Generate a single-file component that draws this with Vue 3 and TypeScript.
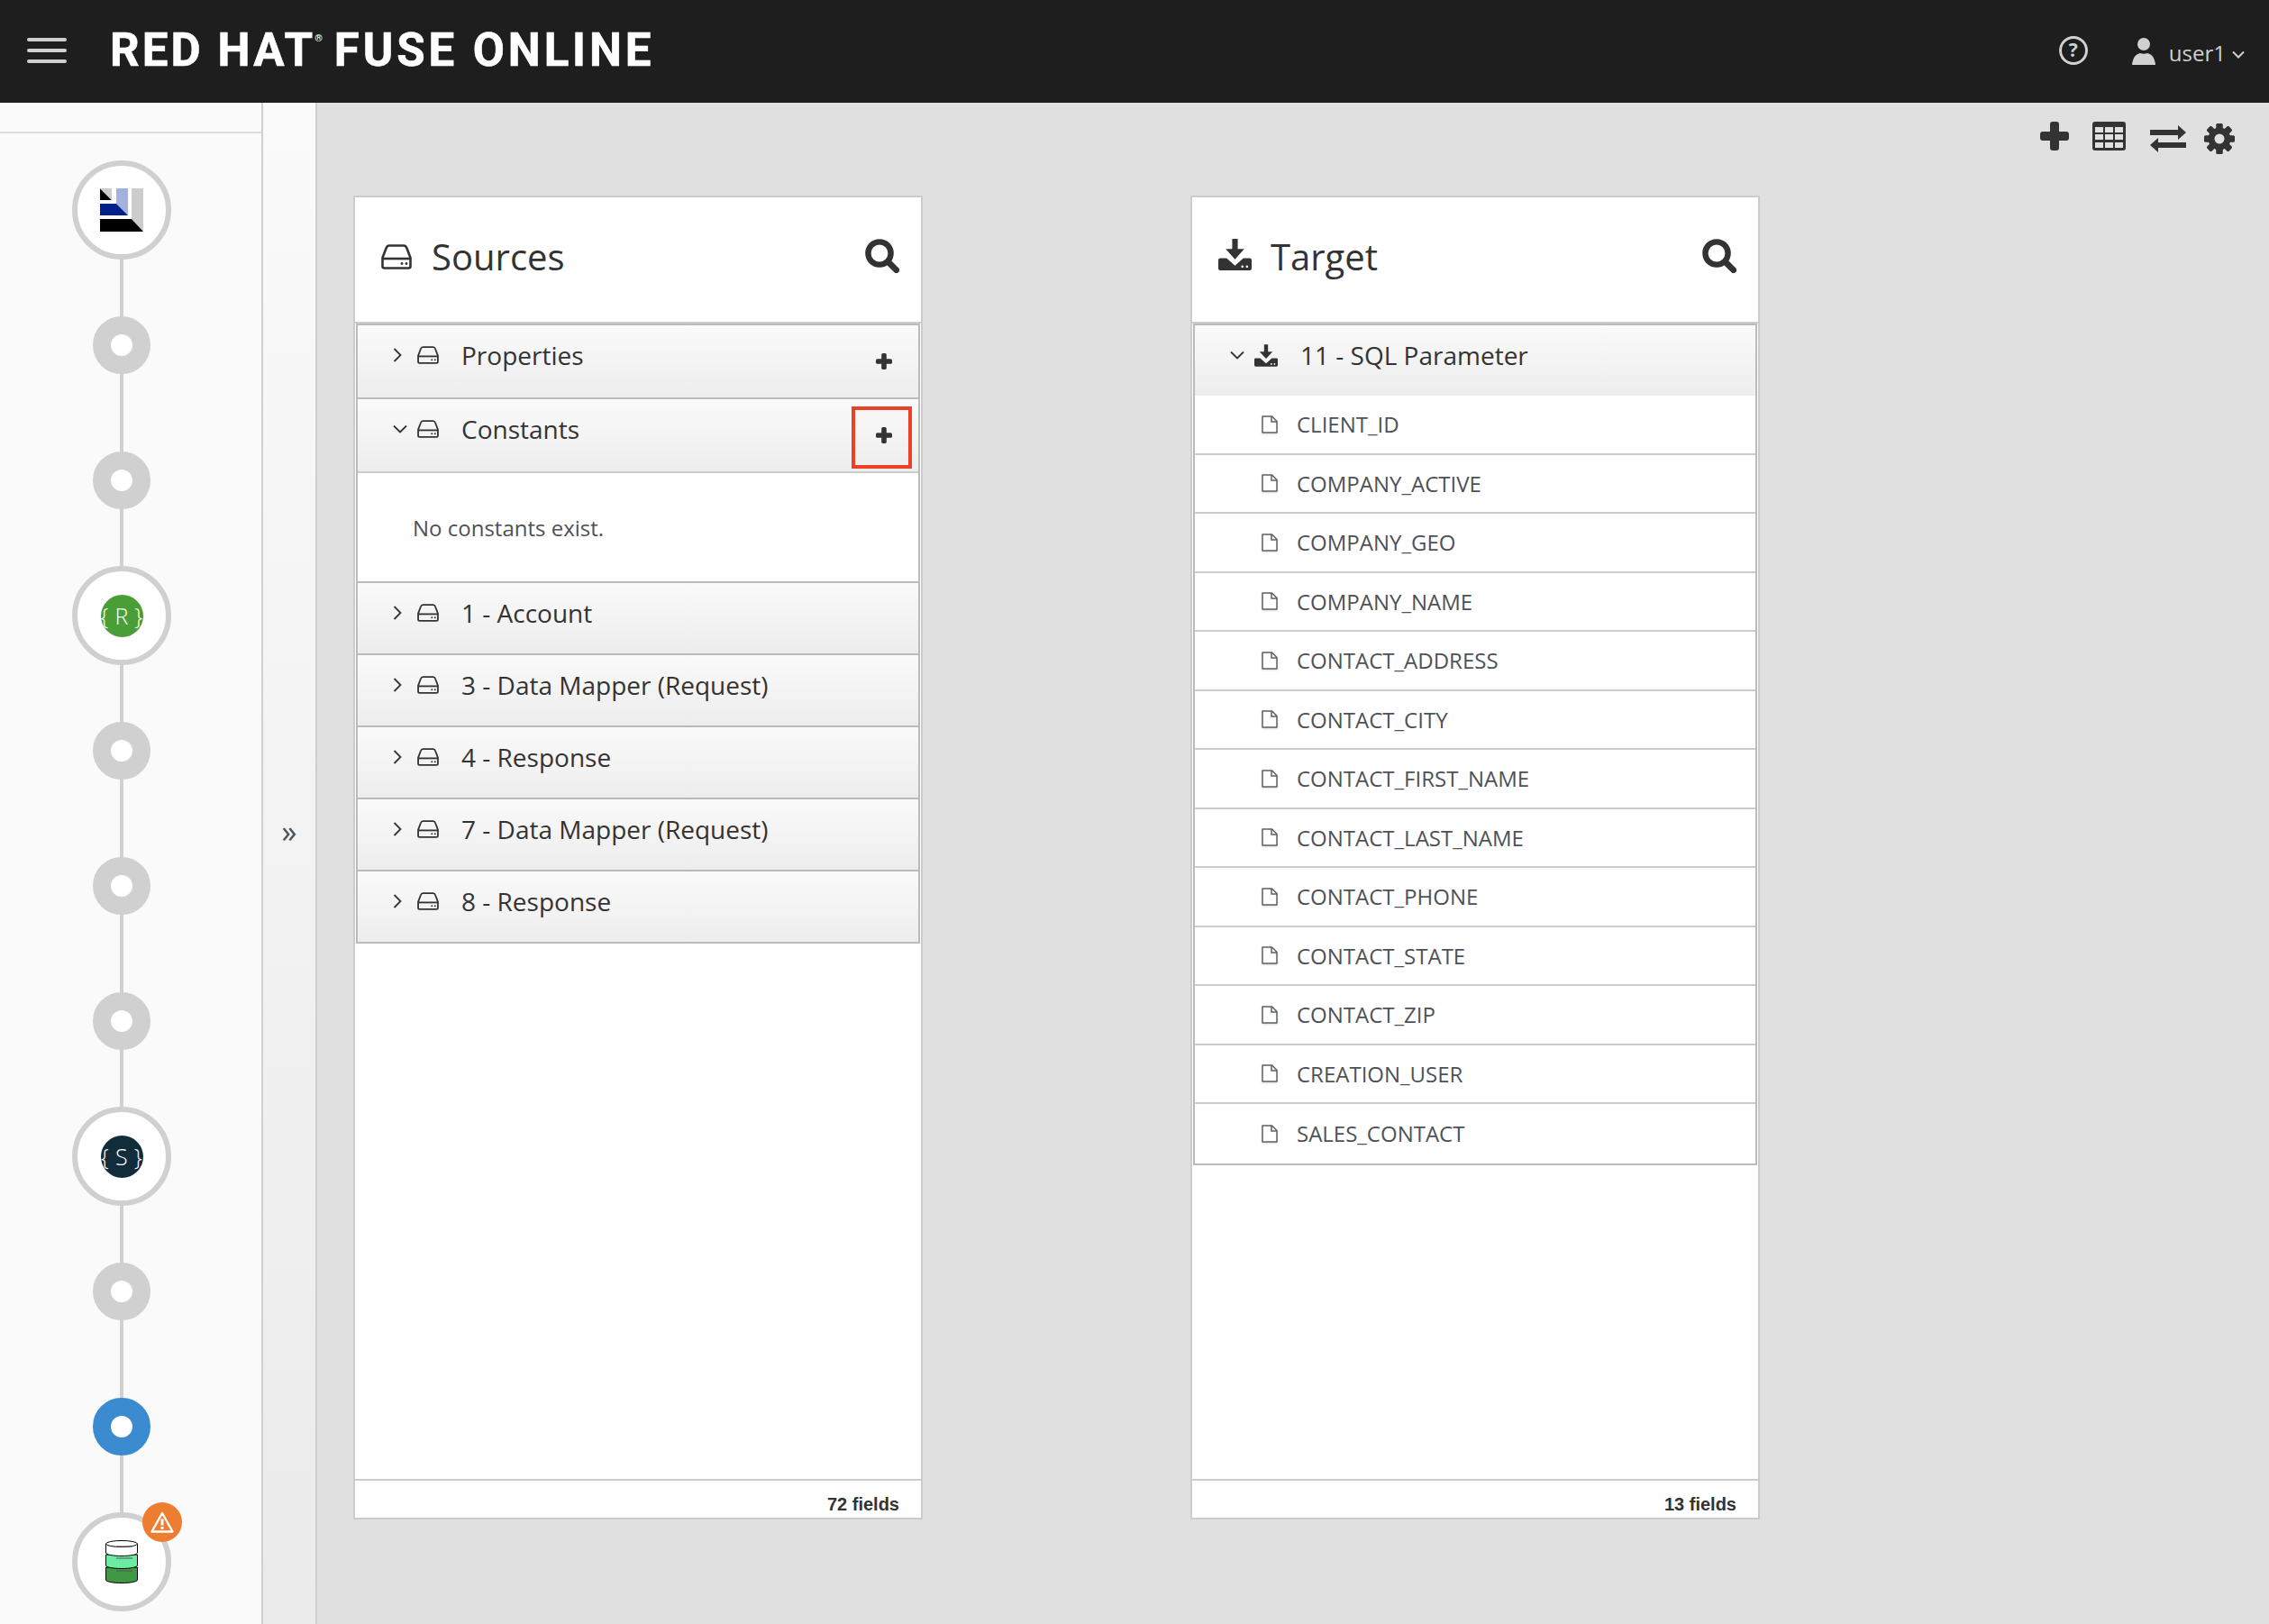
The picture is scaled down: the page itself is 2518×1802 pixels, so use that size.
<script setup lang="ts">
type Step = { kind: "logo" | "node" | "active" | "rest" | "soap" | "db" };

const steps: Step[] = [
  { kind: "logo" },
  { kind: "node" },
  { kind: "node" },
  { kind: "rest" },
  { kind: "node" },
  { kind: "node" },
  { kind: "node" },
  { kind: "soap" },
  { kind: "node" },
  { kind: "active" },
  { kind: "db" },
];

const sources = [
  { label: "Properties", open: false, add: true },
  { label: "Constants", open: true, add: true, marked: true },
  { label: "1 - Account", open: false, add: false },
  { label: "3 - Data Mapper (Request)", open: false, add: false },
  { label: "4 - Response", open: false, add: false },
  { label: "7 - Data Mapper (Request)", open: false, add: false },
  { label: "8 - Response", open: false, add: false },
];

const fields = [
  "CLIENT_ID",
  "COMPANY_ACTIVE",
  "COMPANY_GEO",
  "COMPANY_NAME",
  "CONTACT_ADDRESS",
  "CONTACT_CITY",
  "CONTACT_FIRST_NAME",
  "CONTACT_LAST_NAME",
  "CONTACT_PHONE",
  "CONTACT_STATE",
  "CONTACT_ZIP",
  "CREATION_USER",
  "SALES_CONTACT",
];

const gearTeeth = [0, 45, 90, 135, 180, 225, 270, 315];
</script>

<template>
  <div class="page">
    <svg class="defs" aria-hidden="true">
      <symbol id="hdd" viewBox="0 0 34 28">
        <path d="M9 1.500h16q2.500 0 3.500 3l4 10.500v9.500q0 2-2 2H3.500q-2 0-2-2V15l4-10.500q1-3 3.500-3z" fill="none" stroke="currentColor" stroke-width="2.600" />
        <path d="M2 16h30" stroke="currentColor" stroke-width="2.600" />
        <circle cx="23" cy="21.500" r="1.400" fill="currentColor" />
        <circle cx="28" cy="21.500" r="1.400" fill="currentColor" />
      </symbol>
      <symbol id="hdd-in" viewBox="0 0 36 34">
        <path d="M15 0h6v11h7L18 22 8 11h7z" fill="currentColor" />
        <path d="M0 23q0-2 2-2h7l9 8 9-8h7q2 0 2 2v9q0 2-2 2H2q-2 0-2-2z" fill="currentColor" />
        <circle cx="26" cy="30" r="1.300" fill="#fff" />
        <circle cx="31" cy="30" r="1.300" fill="#fff" />
      </symbol>
      <symbol id="search" viewBox="0 0 38 38">
        <circle cx="16" cy="16" r="12.600" fill="none" stroke="currentColor" stroke-width="6.400" />
        <path d="M25.500 25.500l9.200 9.200" stroke="currentColor" stroke-width="6.800" stroke-linecap="round" />
      </symbol>
      <symbol id="plus" viewBox="0 0 32 32">
        <rect x="11" y="0" width="10" height="32" rx="3" fill="currentColor" />
        <rect x="0" y="11" width="32" height="10" rx="3" fill="currentColor" />
      </symbol>
      <symbol id="file" viewBox="0 0 18 20">
        <path d="M1 1h10.500L17 6.500V19H1z" fill="#fff" stroke="#5c6066" stroke-width="1.500" stroke-linejoin="round" />
        <path d="M11 1v6h6" fill="none" stroke="#5c6066" stroke-width="1.500" />
      </symbol>
    </svg>

    <header class="topbar">
      <div class="burger"><i></i><i></i><i></i></div>
      <div class="brand">RED HAT<span class="reg">®</span><span class="product">FUSE ONLINE</span></div>
      <div class="help">?</div>
      <svg class="user" viewBox="0 0 26 30">
        <circle cx="13" cy="7" r="7" fill="currentColor" />
        <path d="M0 30q0-2 1-5 2-7 8-8 4 1.500 8 0 6 1 8 8 1 3 1 5z" fill="currentColor" />
      </svg>
      <span class="username">user1</span>
      <svg class="caret" viewBox="0 0 14 9"><path d="M1 1.500l6 6 6-6" fill="none" stroke="currentColor" stroke-width="2" /></svg>
    </header>

    <div class="body">
      <aside class="flow">
        <div class="flow-top"></div>
        <div class="steps">
          <div v-for="(step, i) in steps" :key="i" class="step">
            <div v-if="step.kind === 'node' || step.kind === 'active'" class="dot" :class="{ current: step.kind === 'active' }"></div>
            <div v-else class="ring">
              <svg v-if="step.kind === 'logo'" class="brandmark" viewBox="0 0 48 48">
                <path d="M0 0L13 13H0z" fill="#000" />
                <path d="M0 0H13V13z" fill="#ccc" />
                <path d="M18 0H31V30L18 17z" fill="#a3b1dc" />
                <path d="M0 17H18L31 30H0z" fill="#00218c" />
                <path d="M35 0H48V48L35 34z" fill="#ccc" />
                <path d="M0 34H35L48 48H0z" fill="#000" />
              </svg>
              <div v-else-if="step.kind === 'rest'" class="badge rest">{ R }</div>
              <div v-else-if="step.kind === 'soap'" class="badge soap">{ S }</div>
              <template v-else>
                <svg class="database" viewBox="0 0 36 48">
                  <path d="M.500 30v14c0 2 8 3.500 17.500 3.500s17.500-1.500 17.500-3.500V30z" fill="#409845" stroke="#000" />
                  <path d="M.500 16v12c0 2 8 3.500 17.500 3.500s17.500-1.500 17.500-3.500V16z" fill="#6aeca2" stroke="#000" />
                  <path d="M.500 4v10c0 2 8 3.500 17.500 3.500s17.500-1.500 17.500-3.500V4z" fill="#fff" stroke="#000" />
                  <ellipse cx="18" cy="4" rx="17.500" ry="3.500" fill="#fff" stroke="#000" />
                  <path d="M12 7h18M12 20h18M12 34h18" stroke="#555" stroke-width="1" />
                </svg>
                <div class="warn">
                  <svg viewBox="0 0 26 24">
                    <path d="M13 2L24.500 22.500h-23z" fill="none" stroke="#fff" stroke-width="2.400" stroke-linejoin="round" />
                    <rect x="11.500" y="8.500" width="3" height="7" fill="#fff" />
                    <rect x="11.500" y="17" width="3" height="3" fill="#fff" />
                  </svg>
                </div>
              </template>
            </div>
          </div>
        </div>
      </aside>

      <div class="strip"><span class="expand">»</span></div>

      <main class="mapper">
        <div class="toolbar">
          <svg class="tool plus-tool"><use href="#plus" /></svg>
          <svg class="tool table" viewBox="0 0 37 32">
            <rect width="37" height="32" rx="3" fill="currentColor" />
            <g fill="#e0e0e0">
              <rect x="3" y="6" width="9" height="6" />
              <rect x="14" y="6" width="9" height="6" />
              <rect x="25" y="6" width="9" height="6" />
              <rect x="3" y="14" width="9" height="6" />
              <rect x="14" y="14" width="9" height="6" />
              <rect x="25" y="14" width="9" height="6" />
              <rect x="3" y="23" width="9" height="6" />
              <rect x="14" y="23" width="9" height="6" />
              <rect x="25" y="23" width="9" height="6" />
            </g>
          </svg>
          <svg class="tool swap" viewBox="0 0 40 30">
            <path d="M0 5h31V0l9 8-9 8v-5H0z" fill="currentColor" />
            <path d="M40 19H9v-5l-9 8 9 8v-5h31z" fill="currentColor" />
          </svg>
          <svg class="tool gear" viewBox="0 0 34 34">
            <rect v-for="deg in gearTeeth" :key="deg" x="13.500" y="0" width="7" height="34" rx="1.500" fill="currentColor" :transform="`rotate(${deg} 17 17)`" />
            <circle cx="17" cy="17" r="9.500" fill="none" stroke="currentColor" stroke-width="6" />
            <circle cx="17" cy="17" r="5.500" fill="#e0e0e0" />
          </svg>
        </div>

        <div class="panels">
          <section class="panel">
            <div class="panel-head">
              <svg class="head-icon"><use href="#hdd" /></svg>
              <h2>Sources</h2>
              <svg class="search"><use href="#search" /></svg>
            </div>
            <div class="group">
              <template v-for="(doc, i) in sources" :key="doc.label">
                <div class="doc" :class="{ shortened: doc.open, tall: i < 2 }">
                  <span class="chev">
                    <svg v-if="doc.open" class="chev-down" viewBox="0 0 16 10"><path d="M1 1.500l7 7 7-7" fill="none" stroke="currentColor" stroke-width="1.800" /></svg>
                    <svg v-else class="chev-right" viewBox="0 0 10 16"><path d="M1.500 1l7 7-7 7" fill="none" stroke="currentColor" stroke-width="1.800" /></svg>
                  </span>
                  <svg class="doc-icon"><use href="#hdd" /></svg>
                  <span class="doc-name">{{ doc.label }}</span>
                  <svg v-if="doc.add" class="doc-add"><use href="#plus" /></svg>
                  <div v-if="doc.marked" class="marker"></div>
                </div>
                <div v-if="doc.open" class="empty">No constants exist.</div>
              </template>
            </div>
            <div class="panel-foot">72 fields</div>
          </section>

          <section class="panel">
            <div class="panel-head">
              <svg class="head-icon in"><use href="#hdd-in" /></svg>
              <h2>Target</h2>
              <svg class="search"><use href="#search" /></svg>
            </div>
            <div class="group closed">
              <div class="doc target-doc">
                <span class="chev">
                  <svg class="chev-down" viewBox="0 0 16 10"><path d="M1 1.500l7 7 7-7" fill="none" stroke="currentColor" stroke-width="1.800" /></svg>
                </span>
                <svg class="doc-icon in"><use href="#hdd-in" /></svg>
                <span class="doc-name">11 - SQL Parameter</span>
              </div>
              <div v-for="field in fields" :key="field" class="field">
                <svg class="file"><use href="#file" /></svg>
                <span>{{ field }}</span>
              </div>
            </div>
            <div class="panel-foot">13 fields</div>
          </section>
        </div>
      </main>
    </div>
  </div>
</template>

<style scoped>
.page {
  height: 1802px;
  display: flex;
  flex-direction: column;
  overflow: hidden;
  font-family: "Open Sans", "Liberation Sans", sans-serif;
  color: #333;
}
.defs {
  position: absolute;
  width: 0;
  height: 0;
}
.topbar {
  height: 114px;
  flex: none;
  display: flex;
  align-items: center;
  background: #1e1e1e;
  color: #d1d1d1;
  padding: 0 27px 0 30px;
}
.burger {
  width: 44px;
  margin-top: -2px;
  display: flex;
  flex-direction: column;
  gap: 8px;
}
.burger i {
  height: 4px;
  border-radius: 2px;
  background: #d1d1d1;
}
.brand {
  margin-left: 48px;
  margin-right: auto;
  margin-top: -4px;
  font: 700 51px Roboto, "Liberation Sans", sans-serif;
  letter-spacing: 3.100px;
  -webkit-text-stroke: 0.6px #fff;
  color: #fff;
  white-space: nowrap;
  display: flex;
  align-items: flex-start;
}
.reg {
  font-size: 11px;
  letter-spacing: 0;
  line-height: 12px;
  margin: 11px 0 0 -1px;
  -webkit-text-stroke: 0;
}
.product {
  margin-left: 13px;
  letter-spacing: 3.900px;
}
.help {
  width: 32px;
  height: 32px;
  box-sizing: border-box;
  border: 3.500px solid #d1d1d1;
  border-radius: 50%;
  margin-right: 49px;
  font-size: 21px;
  font-weight: 700;
  line-height: 25px;
  text-align: center;
  margin-top: -2px;
}
.user {
  width: 26px;
  height: 30px;
  margin-right: 15px;
  margin-top: -1px;
}
.username {
  font-size: 24px;
  margin-right: 7px;
  margin-top: 2px;
}
.caret {
  width: 14px;
  height: 9px;
  margin-top: 6px;
}
.body {
  flex: 1;
  display: flex;
  min-height: 0;
}
.flow {
  width: 290px;
  flex: none;
  background: #fafafa;
  border-right: 2px solid #d0d0d0;
  overflow: hidden;
}
.flow-top {
  height: 32px;
  border-bottom: 2px solid #dcdcdc;
}
.steps {
  padding: 10px 20px 0 0;
}
.step {
  position: relative;
  height: 150px;
  display: flex;
  align-items: center;
  justify-content: center;
}
.step:not(:last-child)::after {
  content: "";
  position: absolute;
  left: 50%;
  top: 75px;
  width: 4px;
  height: 150px;
  margin-left: -2px;
  background: #d0d0d0;
}
.ring,
.dot {
  position: relative;
  z-index: 1;
  display: flex;
  align-items: center;
  justify-content: center;
  border-radius: 50%;
  box-sizing: border-box;
}
.ring {
  width: 110px;
  height: 110px;
  background: #fff;
  border: 6px solid #d0d0d0;
}
.dot {
  width: 64px;
  height: 64px;
  background: #fff;
  border: 20px solid #d0d0d0;
}
.dot.current {
  border-color: #3a8bd0;
}
.brandmark {
  width: 48px;
  height: 48px;
}
.badge {
  width: 47px;
  height: 47px;
  border-radius: 50%;
  display: flex;
  align-items: center;
  justify-content: center;
  color: #fff;
  font: 300 25px "Open Sans", sans-serif;
  letter-spacing: 0.300px;
  white-space: nowrap;
}
.rest {
  background: #499e36;
}
.soap {
  background: #112d3b;
}
.database {
  width: 36px;
  height: 48px;
}
.warn {
  position: absolute;
  left: 72px;
  top: -17px;
  width: 44px;
  height: 44px;
  border-radius: 50%;
  background: #ed7d31;
  display: flex;
  align-items: center;
  justify-content: center;
}
.warn svg {
  width: 26px;
  height: 24px;
}
.strip {
  width: 60px;
  flex: none;
  box-sizing: border-box;
  background: linear-gradient(#fafafa, #ebebeb);
  border-right: 2px solid #cfcfcf;
  display: flex;
  align-items: center;
  justify-content: center;
  padding-bottom: 72px;
}
.expand {
  font-size: 34px;
  line-height: 34px;
  color: #4d5258;
}
.mapper {
  flex: 1;
  background: #e0e0e0;
  padding: 21px 38px 0 40px;
  min-width: 0;
}
.toolbar {
  height: 82px;
  display: flex;
  align-items: flex-start;
  justify-content: flex-end;
  color: #333;
}
.tool {
  display: block;
}
.plus-tool {
  width: 32px;
  height: 32px;
  margin-right: 26px;
}
.table {
  width: 37px;
  height: 32px;
  margin-right: 27px;
}
.swap {
  width: 40px;
  height: 30px;
  margin: 4px 20px 0 0;
}
.gear {
  width: 34px;
  height: 34px;
  margin-top: 2px;
}
.panels {
  display: flex;
  gap: 297px;
}
.panel {
  width: 632px;
  height: 1469px;
  box-sizing: border-box;
  background: #fff;
  border: 2px solid #ccc;
  display: flex;
  flex-direction: column;
}
.panel-head {
  height: 132px;
  flex: none;
  display: flex;
  align-items: center;
  padding: 0 24px 6px 29px;
  border-bottom: 2px solid #ccc;
}
.panel-head h2 {
  font-size: 40px;
  font-weight: 400;
  margin: 0;
  line-height: 54px;
}
.head-icon {
  width: 34px;
  height: 28px;
  margin-right: 22px;
}
.head-icon.in {
  width: 37px;
  height: 35px;
  margin-right: 21px;
  margin-top: -6px;
}
.search {
  width: 38px;
  height: 38px;
  margin-left: auto;
  margin-top: -2px;
}
.group {
  margin: 0 1px;
  border: solid #bbb;
  border-width: 2px 2px 0;
}
.group.closed {
  border-bottom: 2px solid #bbb;
}
.doc {
  position: relative;
  height: 80px;
  box-sizing: border-box;
  display: flex;
  align-items: center;
  padding: 0 29px 12px 39px;
  background: linear-gradient(#fafafa, #ededed);
  border-bottom: 2px solid #bbb;
}
.doc.tall {
  height: 82px;
  padding-bottom: 14px;
}
.doc.shortened {
  border-bottom-color: #ccc;
}
.doc.target-doc {
  height: 78px;
  padding-left: 39px;
  border-bottom: 0;
}
.chev {
  width: 27px;
  flex: none;
  display: flex;
  align-items: center;
  color: #333;
}
.chev-right {
  width: 10px;
  height: 16px;
}
.chev-down {
  width: 16px;
  height: 10px;
}
.doc-icon {
  width: 24px;
  height: 20px;
  flex: none;
  margin-right: 25px;
}
.doc-icon.in {
  width: 26px;
  height: 25px;
}
.doc-name {
  font-size: 28px;
  line-height: 38px;
  white-space: nowrap;
}
.doc-add {
  width: 18px;
  height: 18px;
  margin-left: auto;
  margin-top: 14px;
}
.marker {
  position: absolute;
  right: 7px;
  top: 8px;
  width: 67px;
  height: 69px;
  box-sizing: border-box;
  border: 4px solid #ee4027;
}
.empty {
  height: 122px;
  box-sizing: border-box;
  display: flex;
  align-items: center;
  padding-left: 61px;
  font-size: 24px;
  color: #4d5258;
  background: #fff;
  border-bottom: 2px solid #bbb;
}
.field {
  height: 65.500px;
  box-sizing: border-box;
  display: flex;
  align-items: center;
  padding-left: 74px;
  font-size: 24px;
  color: #4d5258;
  border-bottom: 2px solid #ccc;
}
.field:last-child {
  border-bottom: 0;
}
.file {
  width: 18px;
  height: 20px;
  margin-right: 21px;
  flex: none;
  filter: drop-shadow(0 1px 1px rgba(0, 0, 0, 0.15));
}
.panel-foot {
  margin-top: auto;
  height: 41px;
  flex: none;
  border-top: 2px solid #ccc;
  padding: 0 24px 0 0;
  text-align: right;
  font: bold 20px/52px "Liberation Sans", sans-serif;
  color: #333;
}
</style>

<style>
html,
body {
  margin: 0;
  background: #e0e0e0;
}
</style>
